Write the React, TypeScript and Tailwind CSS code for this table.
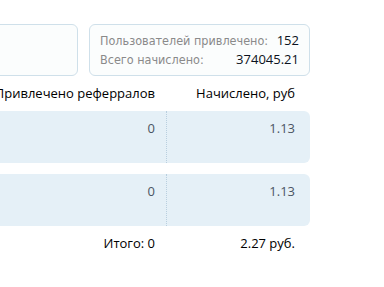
import React from "react";

const rows = [
  { referrals: "0", accrued: "1.13" },
  { referrals: "0", accrued: "1.13" },
];

export default function App() {
  return (
    <div className="w-[384px] h-[287px] overflow-hidden bg-white">
      <div className="ml-[-120px] w-[430px] pt-6">
        {/* summary cards */}
        <div className="flex gap-[11px] h-[52px]">
          <div className="flex-1 rounded-[6px] border border-[#cfe0ea] bg-[#fbfdfd]" />
          <div className="w-[221px] rounded-[6px] border border-[#cfe0ea] bg-[#fbfdfd] px-[10px] flex flex-col justify-center leading-[18px]">
            <div className="flex justify-between items-baseline">
              <span
                className="text-[#8a8a8a] text-[12.5px]"
                style={{ fontFamily: '"DejaVu Sans Condensed", Tahoma, sans-serif' }}
              >
                Пользователей привлечено:
              </span>
              <span
                className="text-[#0b1220] text-[13px]"
                style={{ fontFamily: '"Open Sans", sans-serif' }}
              >
                152
              </span>
            </div>
            <div className="flex justify-between items-baseline">
              <span
                className="text-[#8a8a8a] text-[12.5px]"
                style={{ fontFamily: '"DejaVu Sans Condensed", Tahoma, sans-serif' }}
              >
                Всего начислено:
              </span>
              <span
                className="text-[#0b1220] text-[13px]"
                style={{ fontFamily: '"Open Sans", sans-serif' }}
              >
                374045.21
              </span>
            </div>
          </div>
        </div>

        {/* table */}
        <div style={{ fontFamily: '"Open Sans", "Noto Sans", sans-serif' }}>
          <div className="grid grid-cols-[1fr_144px] h-[35px] items-center text-[13px] text-black">
            <div className="text-right pr-[11px]">Привлечено реферралов</div>
            <div className="text-right pr-[15px]">Начислено, руб</div>
          </div>
          <div className="flex flex-col gap-[11px]">
            {rows.map((r, i) => (
              <div
                key={i}
                className="grid grid-cols-[1fr_144px] h-[52px] rounded-[6px] bg-[#e5f0f7] text-[13px] text-[#4b5563]"
              >
                <div className="text-right pr-[11px] pt-[8px]">{r.referrals}</div>
                <div className="text-right pr-[15px] pt-[8px] border-l border-dotted border-[#b9cfdf]">
                  {r.accrued}
                </div>
              </div>
            ))}
          </div>
          <div className="grid grid-cols-[1fr_144px] h-[36px] items-center text-[13px] text-black">
            <div className="text-right pr-[11px]">Итого: 0</div>
            <div className="text-right pr-[15px]">2.27 руб.</div>
          </div>
        </div>
      </div>
    </div>
  );
}
